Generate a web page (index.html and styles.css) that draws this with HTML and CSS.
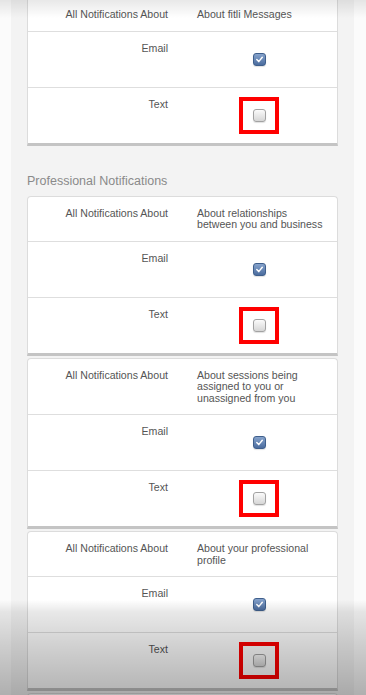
FILE: index.html
```html
<!DOCTYPE html>
<html lang="en">
<head>
    <meta charset="UTF-8">
    <meta name="viewport" content="width=device-width, initial-scale=1.0">
    <title>Notification Settings</title>
    <link rel="stylesheet" href="styles.css">
</head>
<body>
    <div class="page">
        <div class="card first">
            <div class="row head">
                <div class="cell label">All Notifications About</div>
                <div class="cell desc">About fitli Messages</div>
            </div>
            <div class="row">
                <div class="cell label">Email</div>
                <div class="cell box"><span class="cb checked"><svg viewBox="0 0 13 13"><path d="M3.3 6.6 L5.6 9 L9.8 3.8" /></svg></span></div>
            </div>
            <div class="row">
                <div class="cell label">Text</div>
                <div class="cell box"><span class="mark"><span class="cb"></span></span></div>
            </div>
        </div>

        <h2 class="section-title">Professional Notifications</h2>

        <div class="card">
            <div class="row head">
                <div class="cell label">All Notifications About</div>
                <div class="cell desc">About relationships between you and business</div>
            </div>
            <div class="row">
                <div class="cell label">Email</div>
                <div class="cell box"><span class="cb checked"><svg viewBox="0 0 13 13"><path d="M3.3 6.6 L5.6 9 L9.8 3.8" /></svg></span></div>
            </div>
            <div class="row">
                <div class="cell label">Text</div>
                <div class="cell box"><span class="mark"><span class="cb"></span></span></div>
            </div>
        </div>

        <div class="card">
            <div class="row head">
                <div class="cell label">All Notifications About</div>
                <div class="cell desc">About sessions being assigned to you or unassigned from you</div>
            </div>
            <div class="row">
                <div class="cell label">Email</div>
                <div class="cell box"><span class="cb checked"><svg viewBox="0 0 13 13"><path d="M3.3 6.6 L5.6 9 L9.8 3.8" /></svg></span></div>
            </div>
            <div class="row">
                <div class="cell label">Text</div>
                <div class="cell box"><span class="mark"><span class="cb"></span></span></div>
            </div>
        </div>

        <div class="card">
            <div class="row head">
                <div class="cell label">All Notifications About</div>
                <div class="cell desc">About your professional profile</div>
            </div>
            <div class="row">
                <div class="cell label">Email</div>
                <div class="cell box"><span class="cb checked"><svg viewBox="0 0 13 13"><path d="M3.3 6.6 L5.6 9 L9.8 3.8" /></svg></span></div>
            </div>
            <div class="row">
                <div class="cell label">Text</div>
                <div class="cell box"><span class="mark"><span class="cb"></span></span></div>
            </div>
        </div>

        <div class="card last"></div>
    </div>

    <div class="shade-top"></div>
    <div class="shade-bottom"></div>
</body>
</html>
```

FILE: styles.css
```css
html, body {
    margin: 0;
    height: 695px;
    overflow: hidden;
}

body {
    background: #fbfbfb;
    font-family: 'Liberation Sans', Arial, sans-serif;
    color: #555;
    position: relative;
}

.page {
    margin: 0 12px 0 11px;
    padding: 0 16px;
    background: #f3f3f3;
    min-height: 695px;
}

.card {
    background: #fff;
    border: 1px solid #dcdcdc;
    border-bottom: 3px solid #c4c4c4;
    border-radius: 4px 4px 0 0;
    margin-top: 2px;
}

.card.first {
    margin-top: -3px;
}

.card.last {
    height: 40px;
}

.row {
    display: grid;
    grid-template-columns: 1fr 1fr;
    min-height: 55px;
    border-top: 1px solid #dedede;
}

.row.head {
    min-height: 0;
    border-top: none;
}

.cell {
    font-size: 10.6px;
    line-height: 11.5px;
    padding: 11px 14.5px 10px;
}

.label {
    text-align: right;
}

.desc {
    padding-right: 8px;
}

.box {
    display: flex;
    align-items: center;
    justify-content: center;
    padding: 0;
}

.mark {
    display: flex;
    align-items: center;
    justify-content: center;
    box-sizing: border-box;
    width: 40px;
    height: 37px;
    border: 4px solid #f00;
    margin-left: -1px;
}

.cb {
    display: block;
    box-sizing: border-box;
    width: 13px;
    height: 13px;
    border-radius: 3px;
    border: 1px solid #a2a2a2;
    background: linear-gradient(#fbfbfb, #d6d6d6);
    box-shadow: 0 1px 1px rgba(0, 0, 0, 0.12);
}

.cb.checked {
    border-color: #3f5f8c;
    background: linear-gradient(#86a3cc, #4b6c9e);
}

.cb svg {
    display: block;
    width: 11px;
    height: 11px;
    fill: none;
    stroke: #fff;
    stroke-width: 1.7;
    stroke-linecap: round;
    stroke-linejoin: round;
}

.section-title {
    margin: 28px 0 7px;
    font-size: 12.5px;
    line-height: 15px;
    font-weight: normal;
    color: #8a8a8a;
}

.shade-top {
    position: absolute;
    left: 0;
    right: 0;
    top: 0;
    height: 18px;
    background: linear-gradient(rgba(0, 0, 0, 0.09), rgba(0, 0, 0, 0));
    pointer-events: none;
}

.shade-bottom {
    position: absolute;
    left: 0;
    right: 0;
    bottom: 0;
    height: 95px;
    background: linear-gradient(rgba(0, 0, 0, 0) 0, rgba(0, 0, 0, 0.09) 12px, rgba(0, 0, 0, 0.18) 45px, rgba(0, 0, 0, 0.3) 95px);
    pointer-events: none;
}
```
